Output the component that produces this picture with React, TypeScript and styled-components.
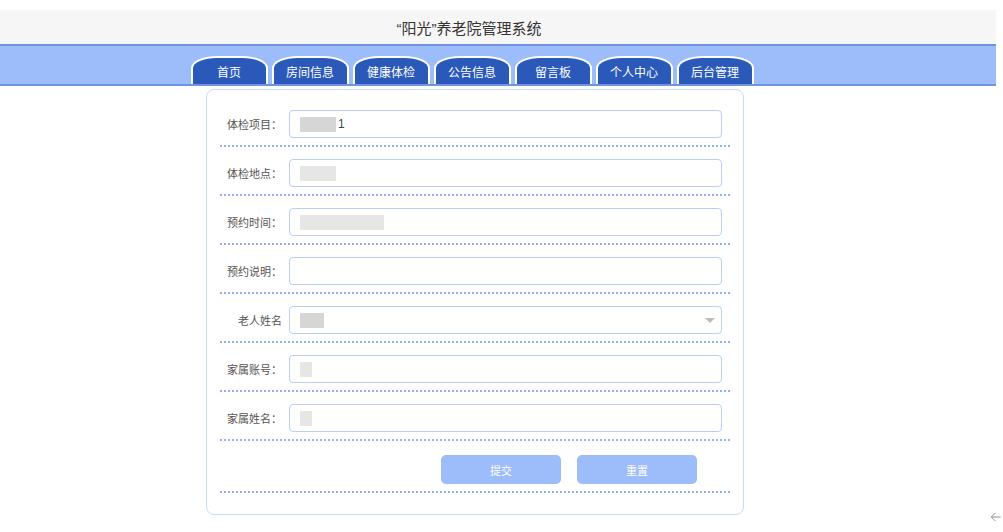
import React from "react";
import styled, { createGlobalStyle } from "styled-components";

const GlobalStyle = createGlobalStyle`
  body {
    margin: 0;
    background: #fff;
    font-family: "Liberation Sans", "Noto Sans CJK SC", sans-serif;
  }
`;

const Header = styled.div`
  margin-top: 10px;
  width: 996px;
  height: 34px;
  background: #f6f6f6;
`;

const Inner = styled.div`
  width: 950px;
  height: 100%;
  display: flex;
  justify-content: center;
  align-items: center;
`;

const Title = styled.h1`
  margin: 0 12px 0 0;
  font-size: 15px;
  font-weight: normal;
  color: #333;
`;

const NavBar = styled.div`
  width: 996px;
  height: 38px;
  background: #9dbcfa;
  border-top: 2px solid #6e94e2;
  border-bottom: 2px solid #6e94e2;
`;

const Tabs = styled.div`
  display: flex;
  gap: 4px;
  align-items: flex-end;
  height: 100%;
  padding-right: 6px;
`;

const Tab = styled.a`
  width: 73px;
  height: 26px;
  display: flex;
  align-items: center;
  justify-content: center;
  background: #2a59b9;
  border: 2px solid #fff;
  border-bottom: none;
  border-radius: 26px 26px 0 0 / 12px 12px 0 0;
  color: #fff;
  font-size: 12px;
  text-decoration: none;
  cursor: pointer;
`;

const Card = styled.form`
  width: 510px;
  margin: 3px 0 0 206px;
  padding: 20px 13px 21px;
  border: 1px solid #c9dbfb;
  border-radius: 8px;
`;

const Group = styled.div`
  margin-top: 12px;
  &:first-child {
    margin-top: 0;
  }
`;

const Row = styled.div`
  display: flex;
  align-items: center;
  height: 28px;
`;

const Dots = styled.div`
  margin-top: 7px;
  border-top: 2px dotted #90b1f3;
`;

const Label = styled.label`
  width: 62px;
  margin-right: 7px;
  text-align: right;
  font-size: 11px;
  color: #555;
  white-space: nowrap;
`;

const Field = styled.div`
  position: relative;
  width: 421px;
  height: 26px;
  display: flex;
  align-items: center;
  padding-left: 10px;
  border: 1px solid #b9cff6;
  border-radius: 4px;
  background: #fff;
  font-size: 12px;
  color: #444;
`;

const Mask = styled.span<{ w: number; light?: boolean }>`
  display: inline-block;
  width: ${(p) => p.w}px;
  height: 15px;
  background: ${(p) => (p.light ? "#e6e6e6" : "#d6d6d6")};
`;

const Caret = styled.span`
  position: absolute;
  right: 6px;
  top: 11px;
  width: 0;
  height: 0;
  border-left: 5px solid transparent;
  border-right: 5px solid transparent;
  border-top: 5px solid #bbb;
`;

const Buttons = styled.div`
  display: flex;
  gap: 16px;
  margin-top: 14px;
  padding-left: 221px;
`;

const Button = styled.button`
  width: 120px;
  height: 29px;
  border: none;
  border-radius: 5px;
  background: #9dbcfa;
  color: #fff;
  font-family: inherit;
  font-size: 11px;
  cursor: pointer;
`;

const BackBtn = styled.div`
  position: fixed;
  right: 0;
  bottom: 8px;
  width: 14px;
  height: 14px;
  color: #888;
`;

const rows: { label: string; mask: number; light?: boolean; tail?: string; select?: boolean }[] = [
  { label: "体检项目：", mask: 36, tail: "1" },
  { label: "体检地点：", mask: 36, light: true },
  { label: "预约时间：", mask: 84, light: true },
  { label: "预约说明：", mask: 0 },
  { label: "老人姓名", mask: 24, select: true },
  { label: "家属账号：", mask: 12, light: true },
  { label: "家属姓名：", mask: 12, light: true },
];

const tabs = ["首页", "房间信息", "健康体检", "公告信息", "留言板", "个人中心", "后台管理"];

export default function App() {
  return (
    <>
      <GlobalStyle />
      <Header>
        <Inner>
          <Title>“阳光”养老院管理系统</Title>
        </Inner>
      </Header>
      <NavBar>
        <Inner>
          <Tabs>
            {tabs.map((t) => (
              <Tab key={t}>{t}</Tab>
            ))}
          </Tabs>
        </Inner>
      </NavBar>
      <Card onSubmit={(e) => e.preventDefault()}>
        {rows.map((r) => (
          <Group key={r.label}>
            <Row>
              <Label>{r.label}</Label>
              <Field>
                {r.mask > 0 && <Mask w={r.mask} light={r.light} />}
                {r.tail && <span style={{ marginLeft: 2 }}>{r.tail}</span>}
                {r.select && <Caret />}
              </Field>
            </Row>
            <Dots />
          </Group>
        ))}
        <Buttons>
          <Button type="submit">提交</Button>
          <Button type="reset">重置</Button>
        </Buttons>
        <Dots />
      </Card>
      <BackBtn>
        <svg viewBox="0 0 24 24" width="14" height="14" fill="none" stroke="currentColor" strokeWidth="1.6">
          <path d="M11 5l-7 7 7 7M4 12h16" />
        </svg>
      </BackBtn>
    </>
  );
}
